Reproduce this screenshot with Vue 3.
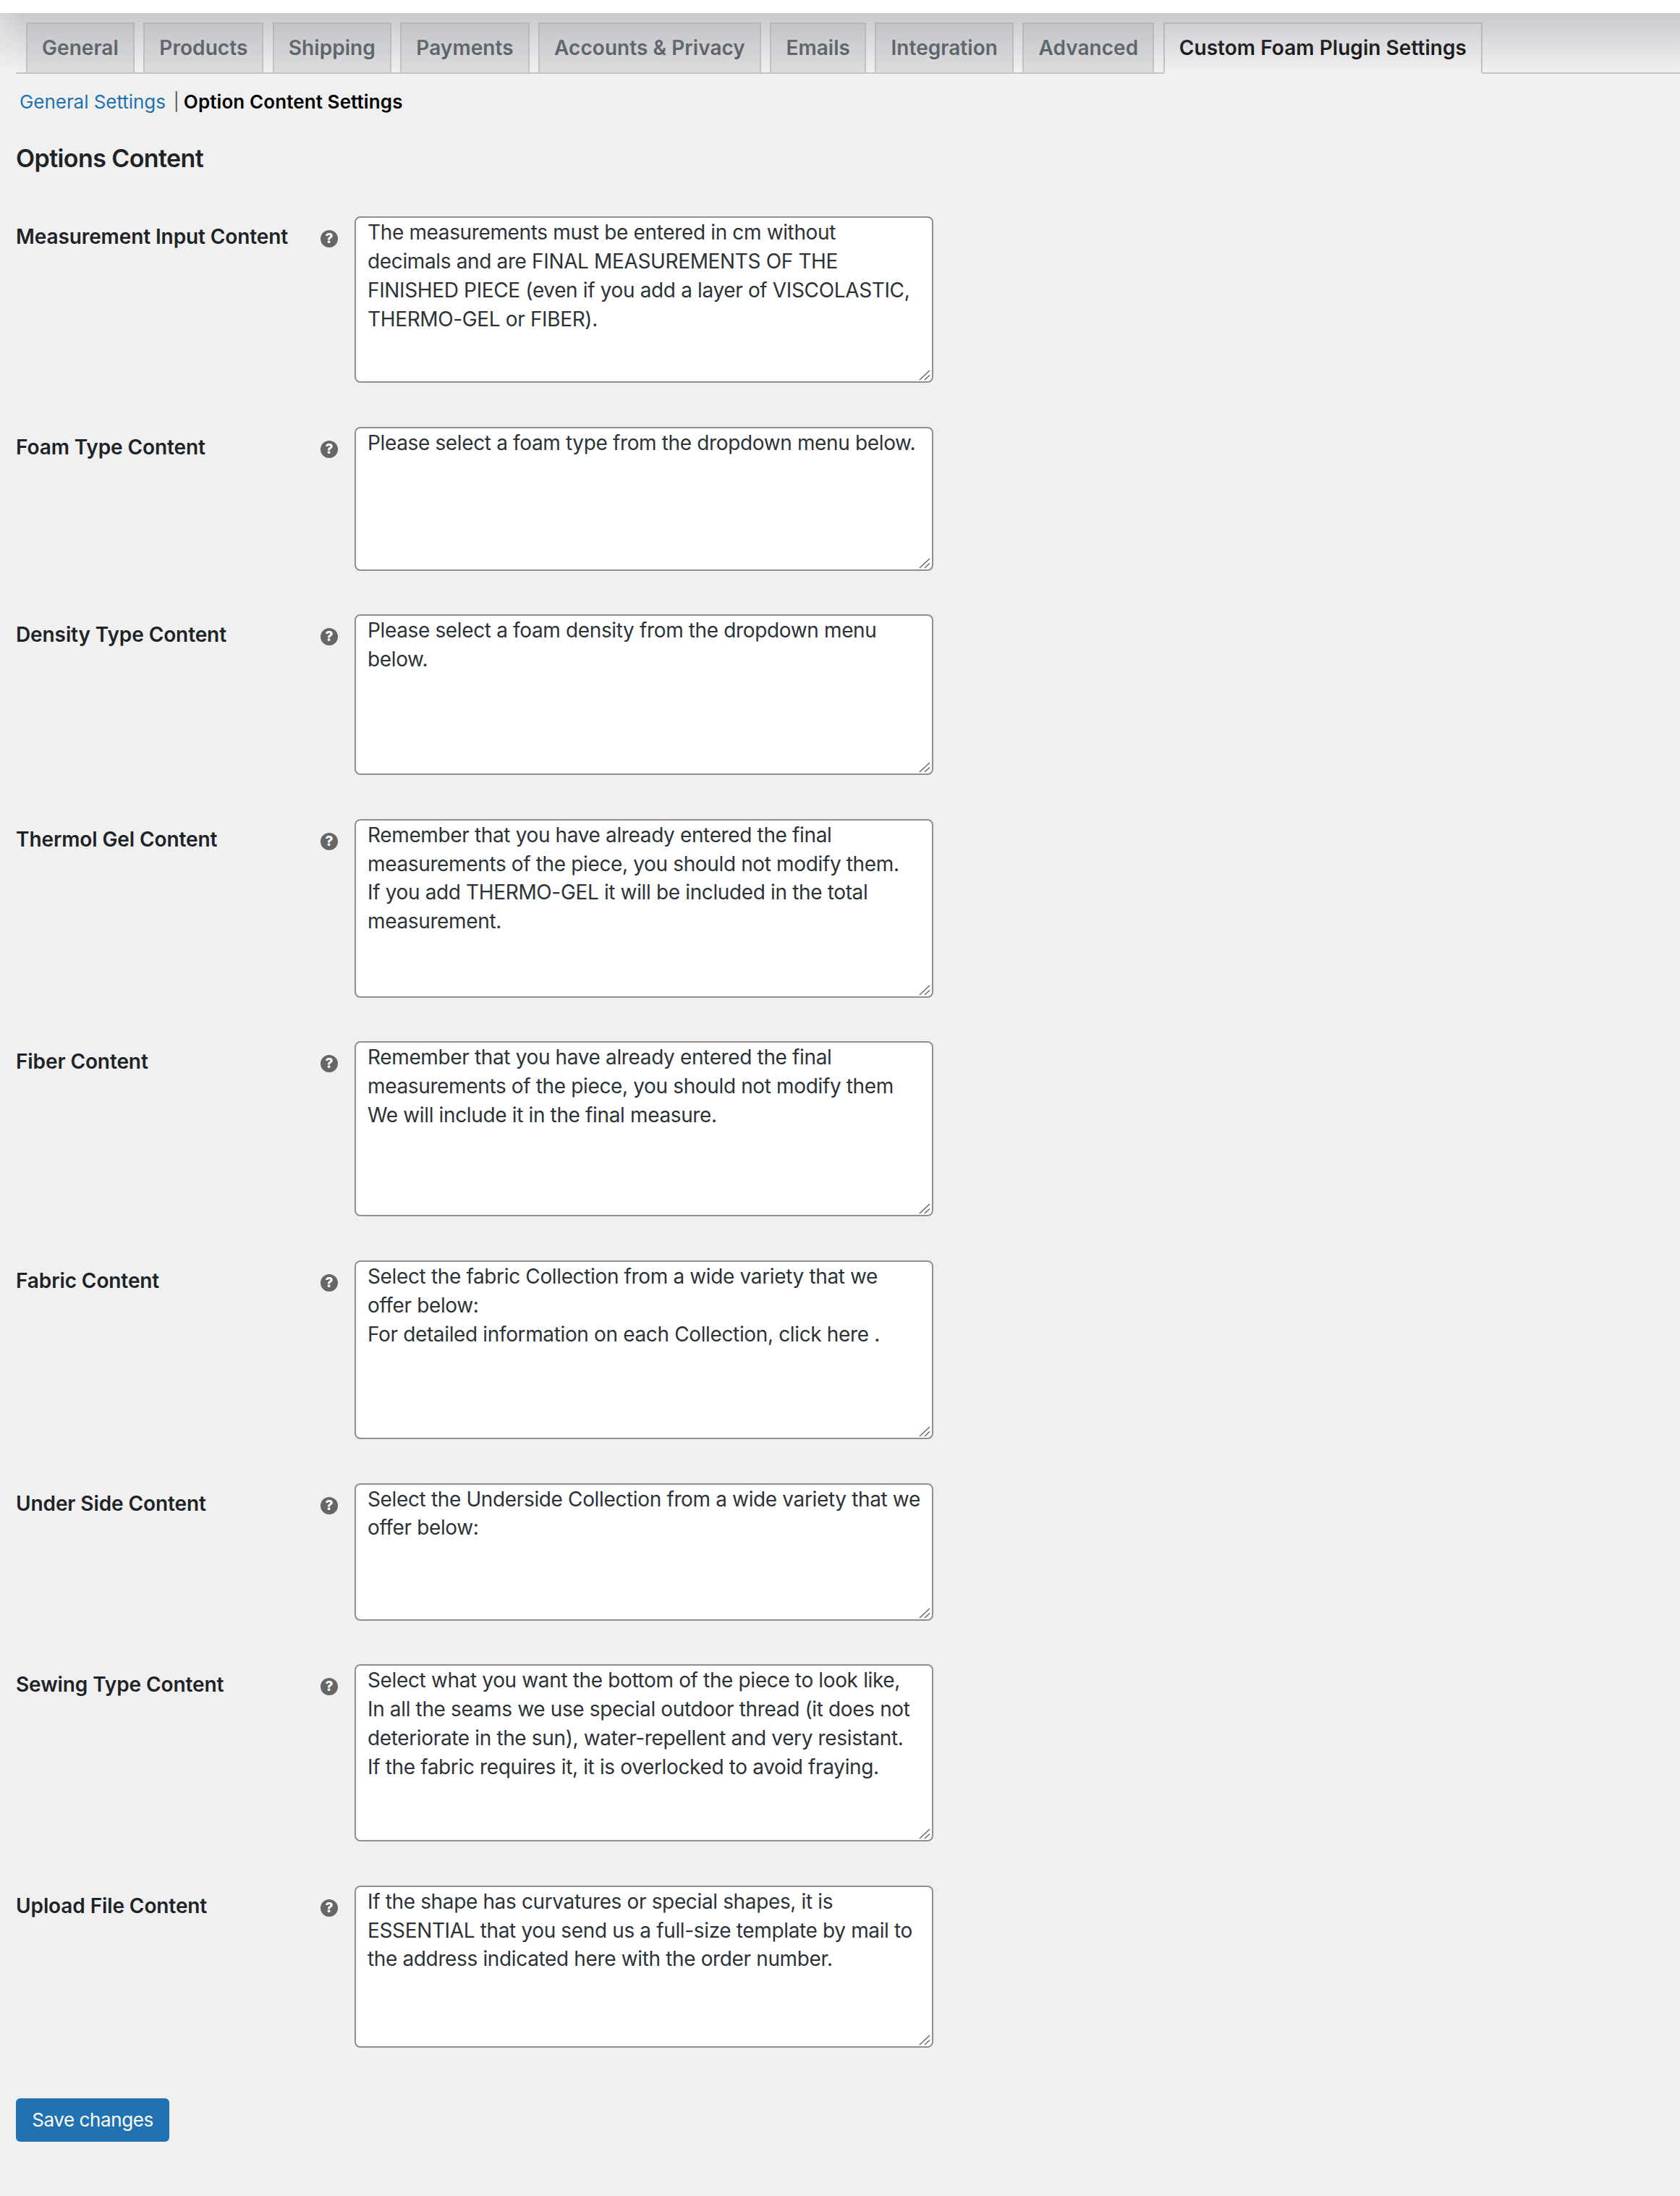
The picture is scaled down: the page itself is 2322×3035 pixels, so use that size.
<script setup>
const tabs = ['General', 'Products', 'Shipping', 'Payments', 'Accounts & Privacy', 'Emails', 'Integration', 'Advanced', 'Custom Foam Plugin Settings']
const rows = [
  { label: 'Measurement Input Content', height: 230, text: 'The measurements must be entered in cm without\ndecimals and are FINAL MEASUREMENTS OF THE\nFINISHED PIECE (even if you add a layer of VISCOLASTIC,\nTHERMO-GEL or FIBER).' },
  { label: 'Foam Type Content', height: 199, text: 'Please select a foam type from the dropdown menu below.' },
  { label: 'Density Type Content', height: 222, text: 'Please select a foam density from the dropdown menu\nbelow.' },
  { label: 'Thermol Gel Content', height: 247, text: 'Remember that you have already entered the final\nmeasurements of the piece, you should not modify them.\nIf you add THERMO-GEL it will be included in the total\nmeasurement.' },
  { label: 'Fiber Content', height: 242, text: 'Remember that you have already entered the final\nmeasurements of the piece, you should not modify them\nWe will include it in the final measure.' },
  { label: 'Fabric Content', height: 247, text: 'Select the fabric Collection from a wide variety that we\noffer below:\nFor detailed information on each Collection, click here .' },
  { label: 'Under Side Content', height: 190, text: 'Select the Underside Collection from a wide variety that we\noffer below:' },
  { label: 'Sewing Type Content', height: 245, text: 'Select what you want the bottom of the piece to look like,\nIn all the seams we use special outdoor thread (it does not\ndeteriorate in the sun), water-repellent and very resistant.\nIf the fabric requires it, it is overlocked to avoid fraying.' },
  { label: 'Upload File Content', height: 224, text: 'If the shape has curvatures or special shapes, it is\nESSENTIAL that you send us a full-size template by mail to\nthe address indicated here with the order number.' },
]
</script>

<template>
  <div class="page">
    <div class="shade"></div>
    <nav class="tabs">
      <a v-for="(t, i) in tabs" :key="t" class="tab" :class="{ active: i === tabs.length - 1 }">{{ t }}</a>
    </nav>
    <div class="subsub">
      <a class="link">General Settings</a><span class="sep">|</span><strong class="current">Option Content Settings</strong>
    </div>
    <h2 class="title">Options Content</h2>
    <div class="form">
      <div v-for="r in rows" :key="r.label" class="row">
        <label class="label">{{ r.label }}</label>
        <span class="help">?</span>
        <div class="area-wrap">
          <textarea class="area" :style="{ height: r.height + 'px' }" :value="r.text" spellcheck="false"></textarea>
          <svg class="grip" width="16" height="16" viewBox="0 0 16 16" aria-hidden="true">
            <path d="M1 15 L15 2 M8 15 L15 8.5" stroke="#6b6d72" stroke-width="1.6" fill="none" />
          </svg>
        </div>
      </div>
    </div>
    <button class="save" type="button">Save changes</button>
  </div>
</template>

<style>
html, body { margin: 0; background: #fff; }
</style>

<style scoped>
.page {
  position: relative;
  box-sizing: border-box;
  height: 3035px;
  border-top: 18px solid #fff;
  background: #f0f0f1;
  font-family: Inter, "Liberation Sans", sans-serif;
  color: #1d2327;
  overflow: hidden;
}
.shade {
  position: absolute;
  left: 0;
  right: 0;
  top: 0;
  height: 80px;
  background: linear-gradient(to bottom, rgba(160, 162, 170, .5), rgba(160, 162, 170, 0));
  -webkit-mask-image: linear-gradient(to right, rgba(0, 0, 0, .6), #000 30px);
  mask-image: linear-gradient(to right, rgba(0, 0, 0, .6), #000 30px);
  pointer-events: none;
  z-index: 2;
}
.tabs {
  display: flex;
  gap: 12.5px;
  margin: 13px 0 0 22px;
  padding-left: 14px;
  border-bottom: 2px solid #c3c4c7;
  height: 69px;
}
.tab {
  box-sizing: border-box;
  height: 71px;
  padding: 0 20px;
  border: 2px solid #c3c4c7;
  background: #dcdcde;
  color: #50575e;
  font-size: 28px;
  font-weight: 600;
  letter-spacing: 0.05px;
  line-height: 67px;
  white-space: nowrap;
}
.tab.active {
  background: #f0f0f1;
  border-bottom-color: #f0f0f1;
  color: #000;
}
.subsub {
  display: flex;
  align-items: center;
  margin: 22px 0 0 27px;
  height: 32px;
  font-size: 26px;
}
.link { color: #2271b1; letter-spacing: -0.05px; }
.sep { margin: 0 6px 0 11px; color: #50575e; font-size: 24px; }
.current { color: #000; font-weight: 600; letter-spacing: 0.1px; }
.title {
  margin: 38px 0 0 22px;
  height: 50px;
  font-size: 34px;
  line-height: 50px;
  font-weight: 600;
  letter-spacing: -0.6px;
}
.form {
  display: flex;
  flex-direction: column;
  gap: 60.6px;
  margin: 55px 0 0 22px;
}
.row {
  display: flex;
  align-items: flex-start;
}
.label {
  width: 421px;
  margin-top: 11px;
  font-size: 28px;
  line-height: 34px;
  font-weight: 600;
  letter-spacing: -0.1px;
}
.help {
  flex: none;
  width: 24px;
  height: 24px;
  margin-top: 19px;
  border-radius: 50%;
  background: #666;
  color: #fff;
  font-size: 19px;
  font-weight: 800;
  line-height: 24px;
  text-align: center;
}
.area-wrap {
  position: relative;
  flex: none;
  display: flex;
  margin-left: 23px;
}
.area {
  box-sizing: border-box;
  width: 800px;
  padding: 1px 16px;
  border: 2px solid #8c8f94;
  border-radius: 8px;
  background: #fff;
  color: #2c3338;
  font-family: inherit;
  font-size: 28px;
  line-height: 39.85px;
  letter-spacing: -0.36px;
  white-space: pre;
  overflow: hidden;
  resize: none;
  outline: none;
}
.grip {
  position: absolute;
  right: 4px;
  bottom: 3px;
  pointer-events: none;
}
.save {
  display: block;
  box-sizing: border-box;
  width: 212px;
  height: 60px;
  margin: 70px 0 0 22px;
  border: 0;
  border-radius: 6px;
  background: #2271b1;
  color: #fff;
  font-family: inherit;
  font-size: 26px;
  letter-spacing: -0.4px;
}
</style>
